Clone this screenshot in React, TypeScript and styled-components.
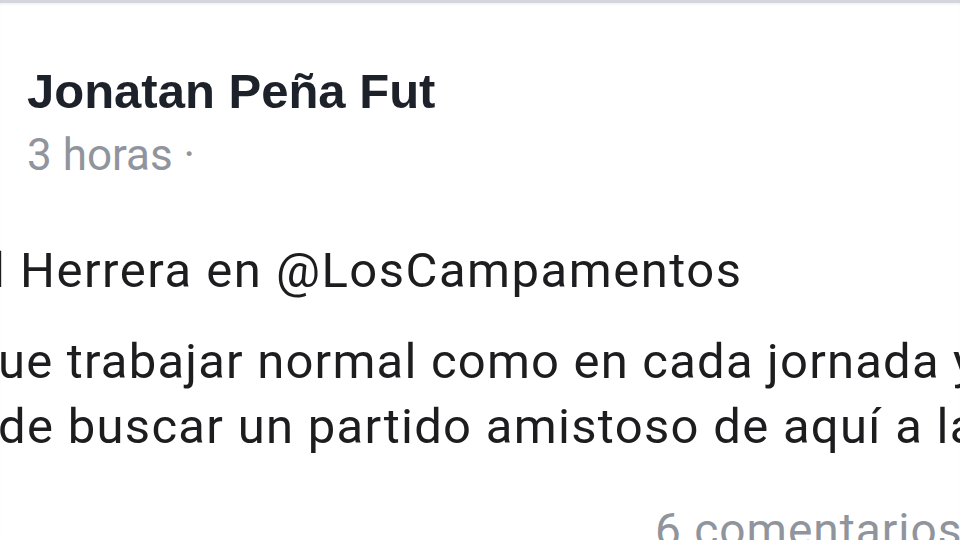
import { FunctionComponent } from "react"
import styled, { createGlobalStyle } from "styled-components"

const GlobalStyle = createGlobalStyle`
    html, body{
        margin: 0;
        padding: 0;
        background: #ffffff;
    }
`

const Page = styled.div`
    width: 960px;
    height: 540px;
    overflow: hidden;
    background: #ffffff;
    border-top: 3px solid #d3d6db;
    box-shadow: inset 0 2px 3px -1px #e9ebee;
    box-sizing: border-box;
    font-family: Roboto, "Liberation Sans", sans-serif;
`

const Header = styled.div`
    padding: 59px 0 0 27px;
    display: flex;
    flex-direction: column;
`

const Name = styled.div`
    font-family: "Liberation Sans", Arial, sans-serif;
    font-size: 49px;
    font-weight: 700;
    color: #1d2129;
    line-height: 58px;
    white-space: nowrap;
`

const Time = styled.div`
    margin-top: 10px;
    font-size: 44px;
    color: #90949c;
    line-height: 50px;
    white-space: nowrap;
`

const Body = styled.div`
    padding-top: 58px;
    color: #1d1d1f;
    font-size: 49px;
    white-space: nowrap;
`

const Line = styled.p<{ $gap?: number; $shift?: number; $spacing?: number }>`
    margin: ${p => p.$gap ?? 0}px 0 0 ${p => p.$shift ?? 0}px;
    letter-spacing: ${p => p.$spacing ?? 1.4}px;
    line-height: 65px;
`

const Footer = styled.div`
    padding: 46px 0 0 655px;
    font-size: 46px;
    letter-spacing: 1px;
    color: #90949c;
    line-height: 50px;
    white-space: nowrap;
`

const App: FunctionComponent = () => {
    return (
        <>
            <GlobalStyle />
            <Page>
                <Header>
                    <Name>Jonatan Peña Fut</Name>
                    <Time>3 horas ·</Time>
                </Header>
                <Body>
                    <Line $shift={-7} $spacing={1.5}>l Herrera en @LosCampamentos</Line>
                    <Line $gap={26} $shift={-2} $spacing={1.2}>ue trabajar normal como en cada jornada y</Line>
                    <Line $shift={-2} $spacing={1.3}>de buscar un partido amistoso de aquí a la</Line>
                </Body>
                <Footer>6 comentarios</Footer>
            </Page>
        </>
    )
}

export default App
